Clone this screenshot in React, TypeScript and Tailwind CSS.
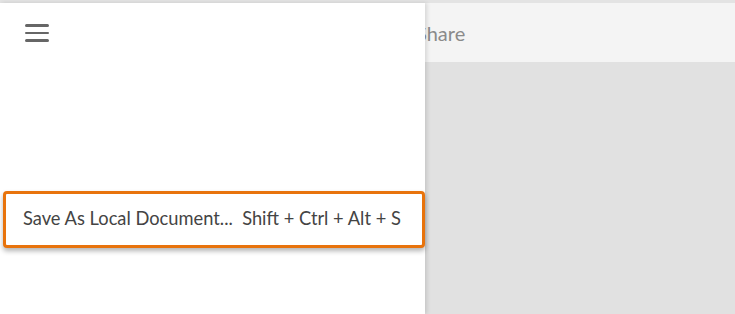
import React from 'react';

const font = { fontFamily: '"Lato", "Open Sans", sans-serif' };

const MenuIcon: React.FC = () => (
  <div className="flex flex-col gap-[5px] w-6">
    <span className="block h-[2.5px] rounded-full bg-[#666]" />
    <span className="block h-[2.5px] rounded-full bg-[#666]" />
    <span className="block h-[2.5px] rounded-full bg-[#666]" />
  </div>
);

const App: React.FC = () => {
  return (
    <div className="w-[735px] h-[314px] flex flex-col bg-white overflow-hidden" style={font}>
      <div className="h-[3px] bg-[#e3e3e3]" />
      <div className="relative flex-1 flex flex-col bg-[#e1e1e1]">
        {/* ribbon header under the drawer */}
        <div className="h-[59px] bg-[#f4f4f4] flex items-center pl-[416px]">
          <span className="text-[20px] text-[#8a8a8a] leading-none">Share</span>
        </div>
        <div className="flex-1" />

        {/* backstage drawer */}
        <aside className="absolute left-0 top-0 bottom-0 w-[425px] bg-white shadow-[2px_0_4px_rgba(0,0,0,0.12)] flex flex-col">
          <div className="pl-[25px] pt-[21px]">
            <MenuIcon />
          </div>
          <div className="mt-[149px] ml-[3px] h-[57px] w-[422px] border-[3px] border-[#e8730c] rounded-[4px] bg-white shadow-[0_3px_5px_rgba(0,0,0,0.3)] flex items-center pl-[17px]">
            <span className="text-[18.3px] text-[#444] whitespace-pre">Save As Local Document...  Shift + Ctrl + Alt + S</span>
          </div>
        </aside>
      </div>
    </div>
  );
};

export default App;
